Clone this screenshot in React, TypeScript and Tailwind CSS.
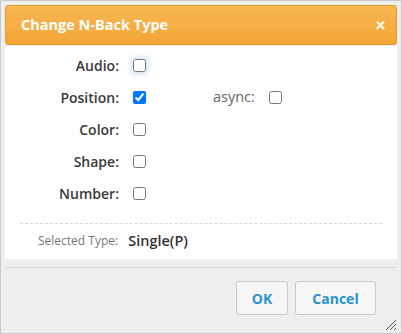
import { useState } from 'react'

const ROWS = ['Audio', 'Position', 'Color', 'Shape', 'Number']

function Box({ checked, focused, onChange }: { checked: boolean; focused?: boolean; onChange: () => void }) {
  return (
    <input
      type="checkbox"
      checked={checked}
      onChange={onChange}
      className={`m-0 w-[13px] h-[13px] ${focused ? 'shadow-[0_0_5px_2px_rgba(120,170,240,0.35)] rounded-[2px]' : ''}`}
    />
  )
}

export default function App() {
  const [checks, setChecks] = useState<Record<string, boolean>>({ Position: true })
  const [async, setAsync] = useState(false)

  const toggle = (k: string) => setChecks(prev => ({ ...prev, [k]: !prev[k] }))

  return (
    <div
      className="w-[402px] h-[334px] bg-[#eeeeee] border border-[#c9c9c9] px-1 pt-1 flex flex-col relative text-[#333]"
      style={{ fontFamily: '"Open Sans", "Noto Sans", sans-serif' }}
    >
      {/* Title bar */}
      <div className="h-[40px] shrink-0 rounded-[3px] border border-[#e39b2a] bg-gradient-to-b from-[#f7b752] to-[#f3a634] flex items-center justify-between pl-[15px] pr-[10px]">
        <span className="text-white font-bold text-[14.5px]">Change N-Back Type</span>
        <span className="text-white font-extrabold text-[13px] leading-none">✕</span>
      </div>

      {/* Content */}
      <div className="mt-[1px] h-[213px] shrink-0 bg-white pt-[3px]">
        {ROWS.map(r => (
          <div key={r} className="h-[32px] flex items-center">
            <span className="w-[114px] text-right text-[14px] font-semibold text-[#3a3a3a]">{r}:</span>
            <span className="ml-[14px] flex items-center">
              <Box checked={!!checks[r]} focused={r === 'Audio'} onChange={() => toggle(r)} />
            </span>
            {r === 'Position' && (
              <>
                <span className="ml-[67px] text-[14.5px] text-[#666]">async:</span>
                <span className="ml-[14px] flex items-center">
                  <Box checked={async} onChange={() => setAsync(a => !a)} />
                </span>
              </>
            )}
          </div>
        ))}
        <div className="mx-[15px] mt-[14px] border-t border-dashed border-[#d8d8d8]" />
        <div className="flex items-center h-[34px] pl-[33px]">
          <span className="text-[12px] text-[#777]">Selected Type:</span>
          <span className="ml-[10px] text-[14.5px] font-semibold text-[#333]">Single(P)</span>
        </div>
      </div>

      {/* Button pane */}
      <div className="mt-[8px] border-t border-[#d6d6d6] flex justify-end gap-[7px] pt-[13px] pr-[21px]">
        <button className="w-[52px] h-[34px] rounded-[3px] border border-[#c8c8c8] bg-[#f6f6f6] text-[#2a93c9] font-bold text-[14px]">
          OK
        </button>
        <button className="w-[81px] h-[34px] rounded-[3px] border border-[#c8c8c8] bg-[#f6f6f6] text-[#2a93c9] font-bold text-[14px]">
          Cancel
        </button>
      </div>

      {/* Resize handle */}
      <svg className="absolute right-[4px] bottom-[2px]" width="12" height="12" viewBox="0 0 12 12">
        <path d="M11 1 L1 11 M11 5 L5 11 M11 9 L9 11" stroke="#555" strokeWidth="1" />
      </svg>
    </div>
  )
}
